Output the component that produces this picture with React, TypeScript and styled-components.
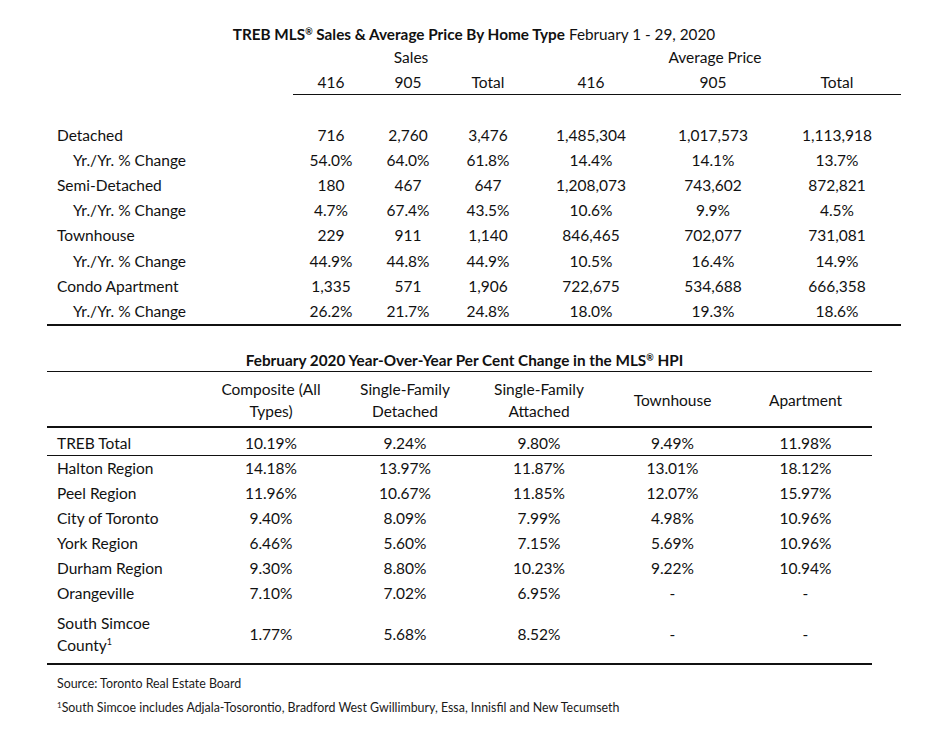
import React from 'react';
import styled, { createGlobalStyle } from 'styled-components';

const Global = createGlobalStyle`
  html, body { margin: 0; padding: 0; background: #ffffff; }
  body { font-family: Lato, "Open Sans", "Liberation Sans", sans-serif; color: #111111; }
`;

const Page = styled.div`
  width: 934px;
  height: 736px;
  box-sizing: border-box;
  padding: 23px 0 0 47px;
  overflow: hidden;
`;

const T1_COLS = '246px 76px 78px 82px 124px 120px 128px';
const T2_COLS = '157px 134px 134px 134px 133px 133px';

const Section = styled.section<{ $w: number }>`
  width: ${(p) => p.$w}px;
`;

const Title = styled.div<{ $shift?: number }>`
  text-align: center;
  font-size: 15.3px;
  line-height: 22px;
  padding-left: ${(p) => p.$shift ?? 0}px;
  white-space: nowrap;
  b { font-weight: 700; }
  sup { font-size: 9px; line-height: 0; vertical-align: 5px; }
`;

const Grid = styled.div<{ $cols: string; $h?: number }>`
  display: grid;
  grid-template-columns: ${(p) => p.$cols};
  align-items: center;
  font-size: 15.5px;
  height: ${(p) => (p.$h ? `${p.$h}px` : 'auto')};
`;

const Span = styled.div<{ $from: number; $to: number }>`
  grid-column: ${(p) => p.$from} / ${(p) => p.$to};
  text-align: center;
  line-height: 25px;
`;

const HeadCell = styled.div`
  text-align: center;
  line-height: 24px;
  border-bottom: 1.5px solid #111;
`;

const Cell = styled.div`
  text-align: center;
  white-space: nowrap;
`;

const Label = styled.div<{ $indent?: boolean }>`
  padding-left: ${(p) => (p.$indent ? 26 : 10)}px;
  white-space: nowrap;
  sup { font-size: 9px; line-height: 0; vertical-align: 6px; }
`;

const Body1 = styled.div`
  margin-top: 27px;
  border-bottom: 2px solid #111;
`;

const Table2 = styled.section`
  width: 825px;
  margin-top: 23px;
`;

const Head2 = styled.div`
  display: grid;
  grid-template-columns: ${T2_COLS};
  align-items: center;
  font-size: 15.5px;
  line-height: 22px;
  border-top: 1.5px solid #111;
  border-bottom: 2px solid #111;
  padding: 6px 0 4px;
`;

const Body2 = styled.div`
  padding-top: 3px;
  border-bottom: 2px solid #111;
`;

const Row2 = styled(Grid)<{ $rule?: boolean }>`
  border-bottom: ${(p) => (p.$rule ? '1px solid #111' : 'none')};
  line-height: 22px;
`;

const Notes = styled.div`
  margin-top: 7px;
  padding-left: 10px;
  font-size: 12.4px;
  line-height: 24px;
  color: #1a1a1a;
  white-space: nowrap;
  sup { font-size: 8px; line-height: 0; vertical-align: 4px; }
`;

type R1 = { label: string; indent?: boolean; v: string[] };

const rows1: R1[] = [
  { label: 'Detached', v: ['716', '2,760', '3,476', '1,485,304', '1,017,573', '1,113,918'] },
  { label: 'Yr./Yr. % Change', indent: true, v: ['54.0%', '64.0%', '61.8%', '14.4%', '14.1%', '13.7%'] },
  { label: 'Semi-Detached', v: ['180', '467', '647', '1,208,073', '743,602', '872,821'] },
  { label: 'Yr./Yr. % Change', indent: true, v: ['4.7%', '67.4%', '43.5%', '10.6%', '9.9%', '4.5%'] },
  { label: 'Townhouse', v: ['229', '911', '1,140', '846,465', '702,077', '731,081'] },
  { label: 'Yr./Yr. % Change', indent: true, v: ['44.9%', '44.8%', '44.9%', '10.5%', '16.4%', '14.9%'] },
  { label: 'Condo Apartment', v: ['1,335', '571', '1,906', '722,675', '534,688', '666,358'] },
  { label: 'Yr./Yr. % Change', indent: true, v: ['26.2%', '21.7%', '24.8%', '18.0%', '19.3%', '18.6%'] },
];

const rows2: { label: React.ReactNode; v: string[]; tall?: boolean }[] = [
  { label: 'TREB Total', v: ['10.19%', '9.24%', '9.80%', '9.49%', '11.98%'] },
  { label: 'Halton Region', v: ['14.18%', '13.97%', '11.87%', '13.01%', '18.12%'] },
  { label: 'Peel Region', v: ['11.96%', '10.67%', '11.85%', '12.07%', '15.97%'] },
  { label: 'City of Toronto', v: ['9.40%', '8.09%', '7.99%', '4.98%', '10.96%'] },
  { label: 'York Region', v: ['6.46%', '5.60%', '7.15%', '5.69%', '10.96%'] },
  { label: 'Durham Region', v: ['9.30%', '8.80%', '10.23%', '9.22%', '10.94%'] },
  { label: 'Orangeville', v: ['7.10%', '7.02%', '6.95%', '-', '-'] },
  {
    label: (
      <>
        South Simcoe
        <br />
        County<sup>1</sup>
      </>
    ),
    v: ['1.77%', '5.68%', '8.52%', '-', '-'],
    tall: true,
  },
];

const heads2: [string, string?][] = [
  ['Composite (All', 'Types)'],
  ['Single-Family', 'Detached'],
  ['Single-Family', 'Attached'],
  ['Townhouse'],
  ['Apartment'],
];

export default function App() {
  return (
    <Page>
      <Global />
      <Section $w={854}>
        <Title>
          <b>
            TREB MLS<sup>®</sup> Sales &amp; Average Price By Home Type
          </b>{' '}
          February 1 - 29, 2020
        </Title>
        <Grid $cols={T1_COLS}>
          <Span $from={2} $to={5}>Sales</Span>
          <Span $from={5} $to={8}>Average Price</Span>
        </Grid>
        <Grid $cols={T1_COLS}>
          <div />
          {['416', '905', 'Total', '416', '905', 'Total'].map((h, i) => (
            <HeadCell key={i}>{h}</HeadCell>
          ))}
        </Grid>
        <Body1>
          {rows1.map((r, i) => (
            <Grid key={i} $cols={T1_COLS} $h={25.2}>
              <Label $indent={r.indent}>{r.label}</Label>
              {r.v.map((v, j) => (
                <Cell key={j}>{v}</Cell>
              ))}
            </Grid>
          ))}
        </Body1>
      </Section>

      <Table2>
        <Title $shift={10}>
          <b>
            February 2020 Year-Over-Year Per Cent Change in the MLS<sup>®</sup> HPI
          </b>
        </Title>
        <Head2>
          <div />
          {heads2.map((h, i) => (
            <Cell key={i}>
              {h[0]}
              {h[1] && (
                <>
                  <br />
                  {h[1]}
                </>
              )}
            </Cell>
          ))}
        </Head2>
        <Body2>
          {rows2.map((r, i) => (
            <Row2 key={i} $cols={T2_COLS} $h={r.tall ? 57 : i === 0 ? 24 : 25} $rule={i === 0}>
              <Label>{r.label}</Label>
              {r.v.map((v, j) => (
                <Cell key={j}>{v}</Cell>
              ))}
            </Row2>
          ))}
        </Body2>
        <Notes>
          <div>Source: Toronto Real Estate Board</div>
          <div>
            <sup>1</sup>South Simcoe includes Adjala-Tosorontio, Bradford West Gwillimbury, Essa, Innisfil and New
            Tecumseth
          </div>
        </Notes>
      </Table2>
    </Page>
  );
}
